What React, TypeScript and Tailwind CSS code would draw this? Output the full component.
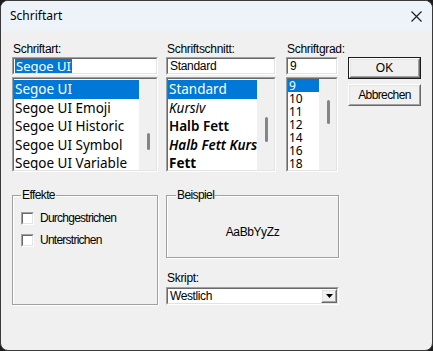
import React from "react";

const ui = { fontFamily: '"Noto Sans", "Open Sans", sans-serif' };
const ms = { fontFamily: '"Liberation Sans", Arial, sans-serif' };

function Sunken({ className, children, bg = "bg-white" }: { className: string; children?: React.ReactNode; bg?: string }) {
  return (
    <div className={"border border-t-[#a0a0a0] border-l-[#a0a0a0] border-b-white border-r-white " + className}>
      <div className={"w-full h-full border border-t-[#696969] border-l-[#696969] border-b-[#e3e3e3] border-r-[#e3e3e3] overflow-hidden " + bg}>
        {children}
      </div>
    </div>
  );
}

function Raised({ className, children }: { className: string; children?: React.ReactNode }) {
  return (
    <div className={"border border-t-white border-l-white border-b-[#696969] border-r-[#696969] " + className}>
      <div className="w-full h-full border border-t-[#e3e3e3] border-l-[#e3e3e3] border-b-[#a0a0a0] border-r-[#a0a0a0] bg-[#f0f0f0] flex items-center justify-center">
        {children}
      </div>
    </div>
  );
}

function Track({ mt, h }: { mt: number; h: number }) {
  return (
    <div className="w-[17px] h-full bg-[#f0f0f0] shrink-0">
      <div className="ml-[8px] w-[3px] rounded-full bg-[#858585]" style={{ marginTop: mt, height: h }} />
    </div>
  );
}

function Label({ children }: { children: React.ReactNode }) {
  return (
    <div className="h-[15px] text-[12px] leading-[15px] tracking-[-0.3px] text-black whitespace-nowrap pl-[1px]" style={ms}>
      {children}
    </div>
  );
}

function CheckRow({ label }: { label: string }) {
  return (
    <div className="flex items-center h-[13px]">
      <div className="w-[13px] h-[13px] border border-t-[#a0a0a0] border-l-[#a0a0a0] border-b-white border-r-white">
        <div className="w-full h-full border border-t-[#696969] border-l-[#696969] border-b-[#e3e3e3] border-r-[#e3e3e3] bg-white" />
      </div>
      <span className="ml-[6px] text-[12px] leading-[13px] tracking-[-0.75px] text-black" style={ms}>
        {label}
      </span>
    </div>
  );
}

const row = "h-[18.5px] leading-[18px] text-[13.5px] pl-[1px] whitespace-nowrap";

export default function App() {
  const fonts = ["Segoe UI", "Segoe UI Emoji", "Segoe UI Historic", "Segoe UI Symbol", "Segoe UI Variable"];
  const sizes = ["9", "10", "11", "12", "14", "16", "18"];
  return (
    <div className="w-[433px] h-[351px] bg-[#1c1c1c]">
      <div className="w-full h-full rounded-[8px] overflow-hidden border border-[#3a3a3a] bg-[#f0f0f0] flex flex-col">
        {/* title bar */}
        <div className="h-[30px] bg-[#eef3f9] flex items-center justify-between pl-[9px] pr-[10px] shrink-0">
          <span className="text-[12px] text-black" style={ui}>Schriftart</span>
          <svg width="11" height="11" viewBox="0 0 11 11" className="mt-[1px]">
            <path d="M0.5 0.5 L10.5 10.5 M10.5 0.5 L0.5 10.5" stroke="#1a1a1a" strokeWidth="1.1" fill="none" />
          </svg>
        </div>

        {/* body */}
        <div className="pl-[11px] pt-[11px] flex flex-col">
          {/* row 1 */}
          <div className="flex">
            {/* Schriftart */}
            <div className="w-[146px] flex flex-col">
              <Label>Schriftart:</Label>
              <Sunken className="h-[18px]">
                <div className="h-full flex items-center pl-[1px]">
                  <span className="bg-[#0078d7] text-white text-[13px] leading-[14px] px-[1px]" style={ui}>Segoe UI</span>
                </div>
              </Sunken>
              <Sunken className="h-[95px] mt-[2px]">
                <div className="flex h-full">
                  <div className="flex-1 pt-[1px]">
                    {fonts.map((f, i) => (
                      <div key={f} className={(i === 0 ? "bg-[#0078d7] text-white " : "text-black ") + row} style={ui}>
                        {f}
                      </div>
                    ))}
                  </div>
                  <Track mt={54} h={17} />
                </div>
              </Sunken>
            </div>

            {/* Schriftschnitt */}
            <div className="w-[110px] ml-[8px] flex flex-col">
              <Label>Schriftschnitt:</Label>
              <Sunken className="h-[18px]">
                <div className="h-full flex items-center pl-[2px] text-[12px] tracking-[-0.3px] text-black" style={ms}>Standard</div>
              </Sunken>
              <Sunken className="h-[95px] mt-[2px]">
                <div className="flex h-full">
                  <div className="flex-1 min-w-0 pt-[1px] overflow-hidden">
                    <div className={"bg-[#0078d7] text-white " + row} style={ui}>Standard</div>
                    <div className={"text-black italic " + row} style={ui}>Kursiv</div>
                    <div className={"text-black font-semibold " + row} style={ui}>Halb Fett</div>
                    <div className={"text-black font-semibold italic " + row} style={ui}>Halb Fett Kursiv</div>
                    <div className={"text-black font-bold " + row} style={ui}>Fett</div>
                  </div>
                  <Track mt={38} h={25} />
                </div>
              </Sunken>
            </div>

            {/* Schriftgrad */}
            <div className="w-[52px] ml-[10px] flex flex-col">
              <Label>Schriftgrad:</Label>
              <Sunken className="h-[18px]">
                <div className="h-full flex items-center pl-[2px] text-[12px] text-black" style={ms}>9</div>
              </Sunken>
              <Sunken className="h-[95px] mt-[2px]">
                <div className="flex h-full">
                  <div className="flex-1">
                    {sizes.map((s, i) => (
                      <div
                        key={s}
                        className={(i === 0 ? "bg-[#0078d7] text-white " : "text-black ") + "h-[13px] leading-[13px] text-[12px] pl-[1px]"}
                        style={ui}
                      >
                        {s}
                      </div>
                    ))}
                  </div>
                  <Track mt={21} h={24} />
                </div>
              </Sunken>
            </div>

            {/* Buttons */}
            <div className="w-[73px] ml-[10px] flex flex-col pt-[15px]">
              <div className="h-[22px] border border-[#1a1a1a]">
                <Raised className="h-full">
                  <span className="text-[12px] text-black" style={ms}>OK</span>
                </Raised>
              </div>
              <Raised className="h-[22px] mt-[5px]">
                <span className="text-[12px] tracking-[-0.6px] text-black" style={ms}>Abbrechen</span>
              </Raised>
            </div>
          </div>

          {/* row 2 */}
          <div className="flex mt-[23px]">
            {/* Effekte */}
            <div className="relative w-[146px] h-[110px] border border-[#a0a0a0] shadow-[inset_1px_1px_0_#ffffff,1px_1px_0_#ffffff]">
              <span className="absolute left-[8px] -top-[8px] px-[1px] bg-[#f0f0f0] text-[12px] leading-[14px] tracking-[-0.6px] text-black" style={ms}>
                Effekte
              </span>
              <div className="flex flex-col gap-[9px] pl-[8px] pt-[16px]">
                <CheckRow label="Durchgestrichen" />
                <CheckRow label="Unterstrichen" />
              </div>
            </div>

            <div className="ml-[8px] w-[173px] flex flex-col">
              {/* Beispiel */}
              <div className="relative h-[63px] border border-[#a0a0a0] shadow-[inset_1px_1px_0_#ffffff,1px_1px_0_#ffffff] flex items-center justify-center pt-[10px]">
                <span className="absolute left-[9px] -top-[8px] px-[1px] bg-[#f0f0f0] text-[12px] leading-[14px] tracking-[-0.6px] text-black" style={ms}>
                  Beispiel
                </span>
                <span className="text-[12px] tracking-[-0.4px] text-black" style={ms}>AaBbYyZz</span>
              </div>
              <div className="mt-[13px]">
                <Label>Skript:</Label>
              </div>
              <Sunken className="h-[18px] mt-[1px]">
                <div className="flex h-full">
                  <div className="flex-1 flex items-center pl-[2px] text-[12px] tracking-[-0.4px] text-black" style={ms}>Westlich</div>
                  <Raised className="w-[16px] h-full">
                    <svg width="7" height="4" viewBox="0 0 7 4">
                      <path d="M0 0 H7 L3.5 4 Z" fill="#000" />
                    </svg>
                  </Raised>
                </div>
              </Sunken>
            </div>
          </div>
        </div>
      </div>
    </div>
  );
}
